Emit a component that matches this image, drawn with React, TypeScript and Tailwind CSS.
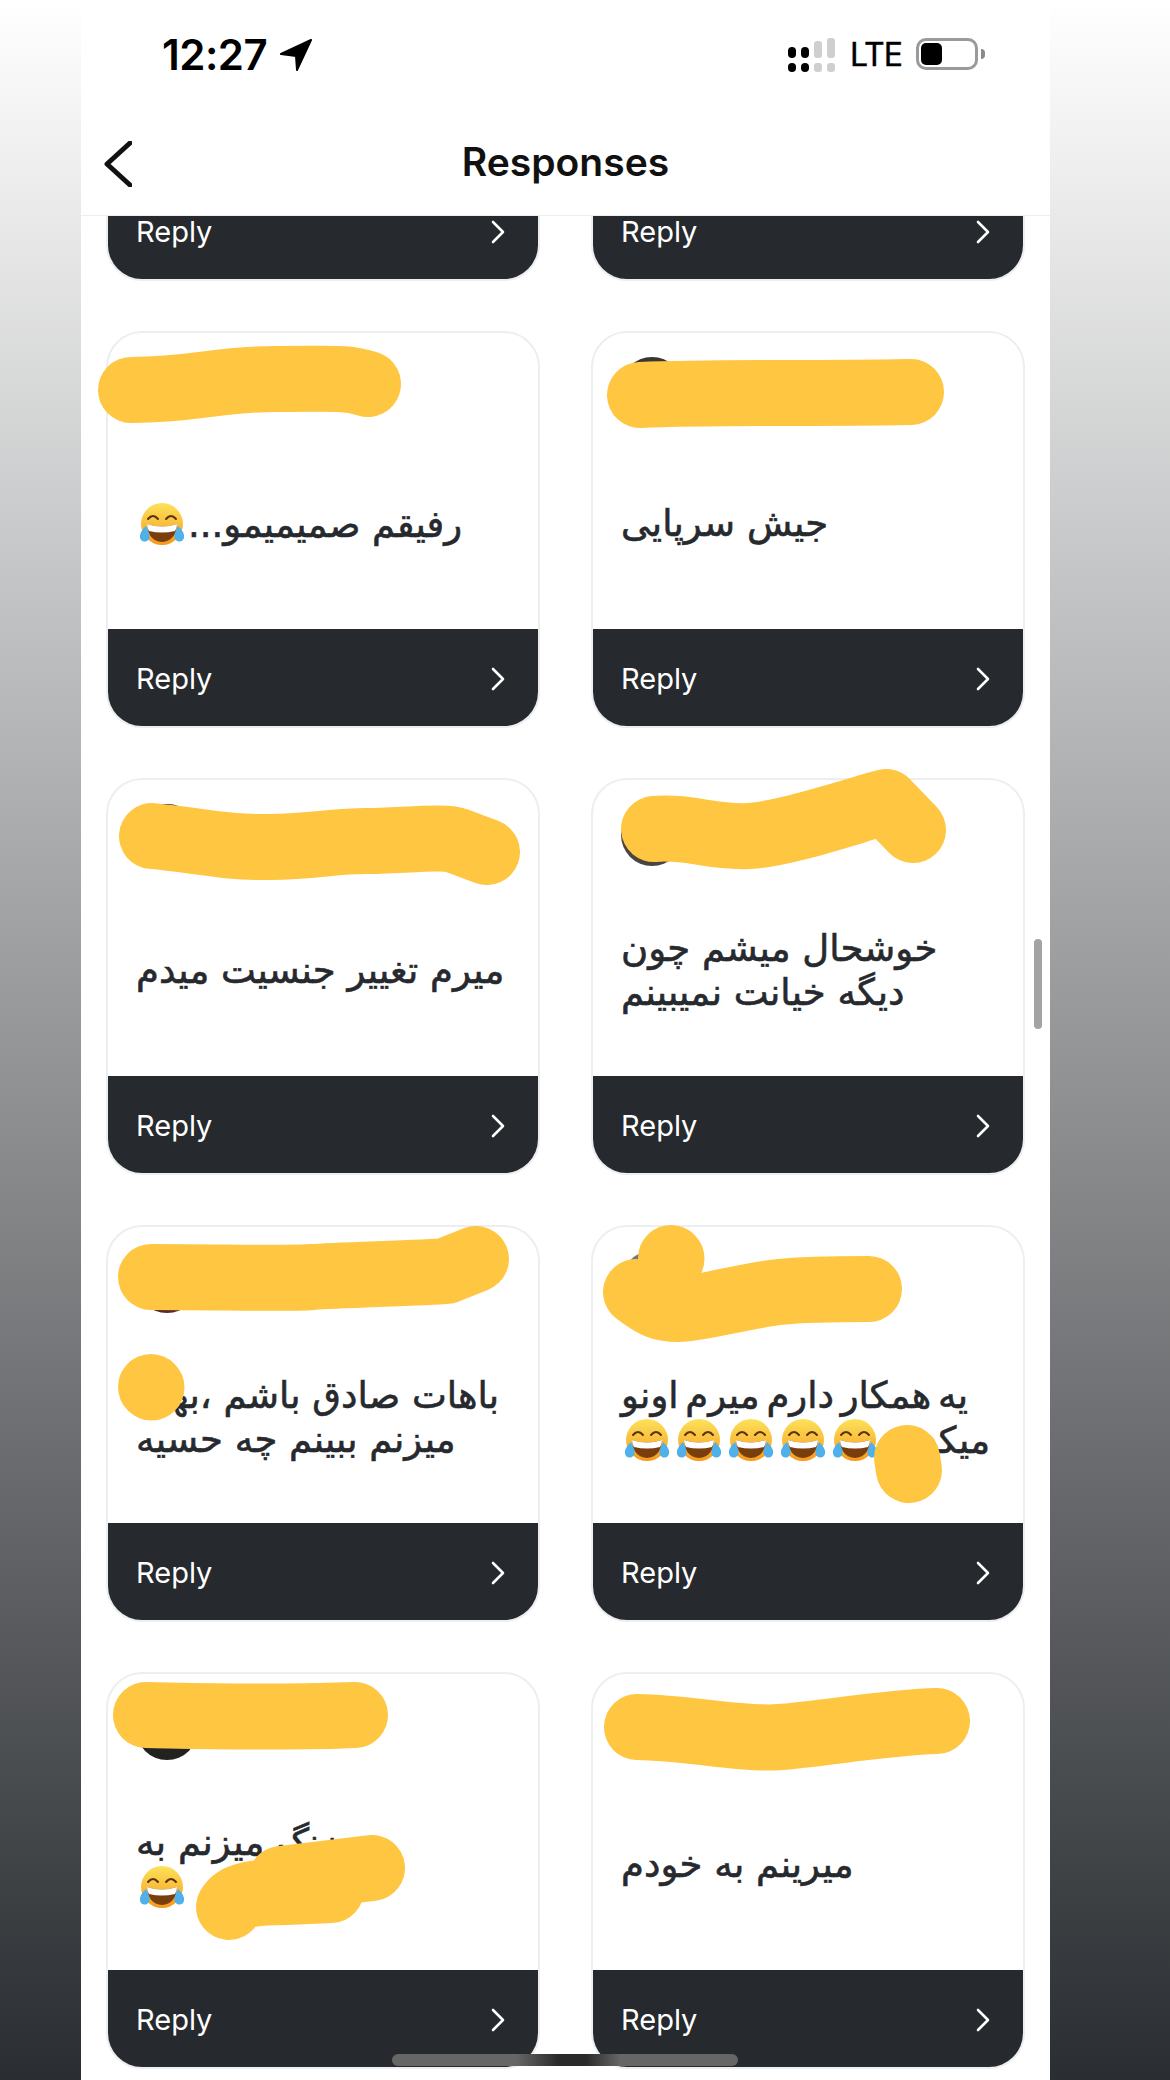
import type { ReactNode } from "react";

const YELLOW = "#fec641";

function Emoji() {
  return (
    <svg viewBox="0 0 46 44" className="inline-block w-[46px] h-[44px] mx-[3px] align-[-9px]">
      <defs>
        <linearGradient id="face" x1="0" y1="0" x2="0" y2="1">
          <stop offset="0" stopColor="#fde25a" />
          <stop offset="1" stopColor="#f59a1e" />
        </linearGradient>
      </defs>
      <circle cx="23" cy="22" r="21" fill="url(#face)" />
      <path d="M9 17q5-6 10 0M27 17q5-6 10 0" fill="none" stroke="#5b3210" strokeWidth="2" strokeLinecap="round" />
      <path d="M8 22q15 5 30 0q-1 17-15 18q-14-1-15-18z" fill="#7a3e0c" />
      <path d="M8 22q15 5 30 0q0 4-2 7q-13 3-26 0q-2-3-2-7z" fill="#fff" />
      <path d="M7 24q-7 6-6 12q2 5 7 3q4-3 2-8z" fill="#4fb0ea" />
      <path d="M39 24q7 6 6 12q-2 5-7 3q-4-3-2-8z" fill="#4fb0ea" />
    </svg>
  );
}

function Chevron() {
  return (
    <svg viewBox="0 0 14 24" className="w-[14px] h-[24px]" fill="none" stroke="#fff" strokeWidth="2.6" strokeLinecap="round" strokeLinejoin="round">
      <path d="M2 2l10 10L2 22" />
    </svg>
  );
}

function Blot({ d }: { d: string }) {
  return <path d={d} fill="none" stroke={YELLOW} strokeWidth="66" strokeLinecap="round" strokeLinejoin="round" />;
}

function Card({ avatar, children, blots }: { avatar: string; children?: ReactNode; blots: string[] }) {
  return (
    <div className="relative w-[434px] h-[397px]">
      <div className="h-full flex flex-col rounded-[36px] border-2 border-[#eceef0] bg-white overflow-hidden">
        <div className="flex-1 flex flex-col pt-[24px] pl-[28px] pr-[20px] min-h-0">
          <div className={`w-[62px] h-[62px] rounded-full shrink-0 ${avatar}`} />
          <div className="flex-1 flex items-center">
            <p dir="rtl" className="text-left w-full text-[37px] leading-[44px] text-[#26292d] [-webkit-text-stroke:0.6px_#26292d] font-['DejaVu_Sans',sans-serif]">
              {children}
            </p>
          </div>
        </div>
        <div className="h-[97px] shrink-0 bg-[#26292d] flex items-center justify-between pl-[28px] pr-[33px] pt-[2px]">
          <span className="text-[29px] text-white font-['Inter',sans-serif]">Reply</span>
          <Chevron />
        </div>
      </div>
      {blots.length > 0 && (
        <svg viewBox="0 0 433 395" className="absolute left-0 top-0 w-[433px] h-[395px] overflow-visible pointer-events-none">
          {blots.map((d, i) => (
            <Blot key={i} d={d} />
          ))}
        </svg>
      )}
    </div>
  );
}

function StatusBar() {
  return (
    <div className="h-[125px] flex items-start justify-between pl-[81px] pr-[65px] pt-[28px] text-black font-['Inter',sans-serif]">
      <div className="flex items-center gap-[13px]">
        <span className="text-[42px] leading-[54px] font-semibold tracking-[-0.5px]">12:27</span>
        <svg viewBox="0 0 32 32" className="w-[32px] h-[32px]" fill="#000" stroke="#000" strokeWidth="2" strokeLinejoin="round">
          <path d="M31 1L1 15l15 2 1 14z" />
        </svg>
      </div>
      <div className="flex items-center gap-[14px] pt-[10px]">
        <svg viewBox="0 0 48 34" className="w-[48px] h-[34px]">
          <rect x="0" y="9" width="8" height="11" rx="4" fill="#000" />
          <rect x="0" y="25" width="8" height="9" rx="4" fill="#000" />
          <rect x="13" y="9" width="8" height="11" rx="4" fill="#000" />
          <rect x="13" y="25" width="8" height="9" rx="4" fill="#000" />
          <rect x="26" y="3" width="8" height="17" rx="3" fill="#cfcfcf" />
          <rect x="26" y="25" width="8" height="9" rx="3" fill="#cfcfcf" />
          <rect x="39" y="0" width="8" height="20" rx="3" fill="#cfcfcf" />
          <rect x="39" y="25" width="8" height="9" rx="3" fill="#cfcfcf" />
        </svg>
        <span className="text-[32px] leading-[34px] tracking-[-1px] [-webkit-text-stroke:0.4px_#000]">LTE</span>
        <div className="flex items-center gap-[3px] -mt-[2px]">
          <div className="w-[62px] h-[32px] rounded-[10px] border-[3px] border-[#9a9a9a] p-[2px]">
            <div className="w-[21px] h-full rounded-[5px] bg-black" />
          </div>
          <div className="w-[4px] h-[10px] rounded-r-full bg-[#8a8a8a]" />
        </div>
      </div>
    </div>
  );
}

export default function App() {
  return (
    <div className="h-[2080px] overflow-hidden px-[81px] pr-[120px] bg-[linear-gradient(180deg,#ffffff_0%,#2a2d31_100%)]">
      <div className="relative w-[969px] h-[2080px] bg-white overflow-hidden flex flex-col">
        <StatusBar />

        <div className="h-[91px] shrink-0 border-b border-[#eeeeee] grid grid-cols-[1fr_auto_1fr] items-center pl-[23px] pb-[16px] bg-white relative z-10">
          <svg viewBox="0 0 28 46" className="w-[28px] h-[46px] mt-[4px]" fill="none" stroke="#111" strokeWidth="5" strokeLinecap="round" strokeLinejoin="round">
            <path d="M26 2L3 23l23 21" />
          </svg>
          <h1 className="text-[39px] leading-[48px] font-semibold text-[#111] font-['Inter',sans-serif] -ml-[23px]">Responses</h1>
          <div />
        </div>

        <div className="flex-1 min-h-0 overflow-hidden pl-[25px]">
          <div className="grid grid-cols-[434px_434px] gap-x-[51px] gap-y-[50px] -mt-[332px]">
            <Card avatar="bg-[#222]" blots={[]} />
            <Card avatar="bg-[#222]" blots={[]} />

            <Card avatar="bg-[#222]" blots={["M25 59C90 59 110 48 170 48S240 46 262 53"]}>
              رفیقم صمیمیمو...<Emoji />
            </Card>
            <Card avatar="bg-[#3a3533]" blots={["M49 64C120 61 200 63 320 61"]}>جیش سرپایی</Card>

            <Card avatar="bg-[#222]" blots={["M46 58C90 62 120 70 164 69S230 63 260 63S340 58 349 62L381 74"]}>میرم تغییر جنسیت میدم</Card>
            <Card avatar="bg-[#4a4543]" blots={["M63 51C100 48 120 60 158 58S270 30 295 24L322 52"]}>
              خوشحال میشم چون
              <br />
              دیگه خیانت نمیبینم
            </Card>

            <Card avatar="bg-[#5a2a2a]" blots={["M45 52C120 52 180 54 206 52S320 48 340 46L370 34", "M45 162L45.5 162.5"]}>
              باهات صادق باشم ،بهت
              <br />
              میزنم ببینم چه حسیه
            </Card>
            <Card avatar="bg-[#777]" blots={["M80 33L80.5 33.5", "M45 67C62 80 70 84 88 84S160 70 188 67S260 64 278 64", "M316 233L318 245"]}>
              <span className="[word-spacing:-5px]">یه همکار دارم میرم اونو</span>
              <br />
              میکشم<Emoji /><Emoji /><Emoji /><Emoji /><Emoji />
            </Card>

            <Card avatar="bg-[#222]" blots={["M40 43C100 44 180 46 249 43", "M123 235C130 222 150 220 180 220L225 218", "M175 207L266 196"]}>
              زنگ میزنم به
              <br />
              خودم <Emoji />
            </Card>
            <Card avatar="bg-[#aaa]" blots={["M46 55C100 56 150 68 189 65S300 50 346 49"]}>میرینم به خودم</Card>
          </div>
        </div>

        <div className="absolute left-[953px] top-[939px] w-[8px] h-[90px] rounded-full bg-[#a3a3a3]" />
        <div className="absolute left-[311px] top-[2054px] w-[346px] h-[12px] rounded-full bg-[linear-gradient(90deg,#666_0%,#666_36%,#2a2a2a_48%,#2a2a2a_56%,#666_66%,#666_100%)]" />
      </div>
    </div>
  );
}
